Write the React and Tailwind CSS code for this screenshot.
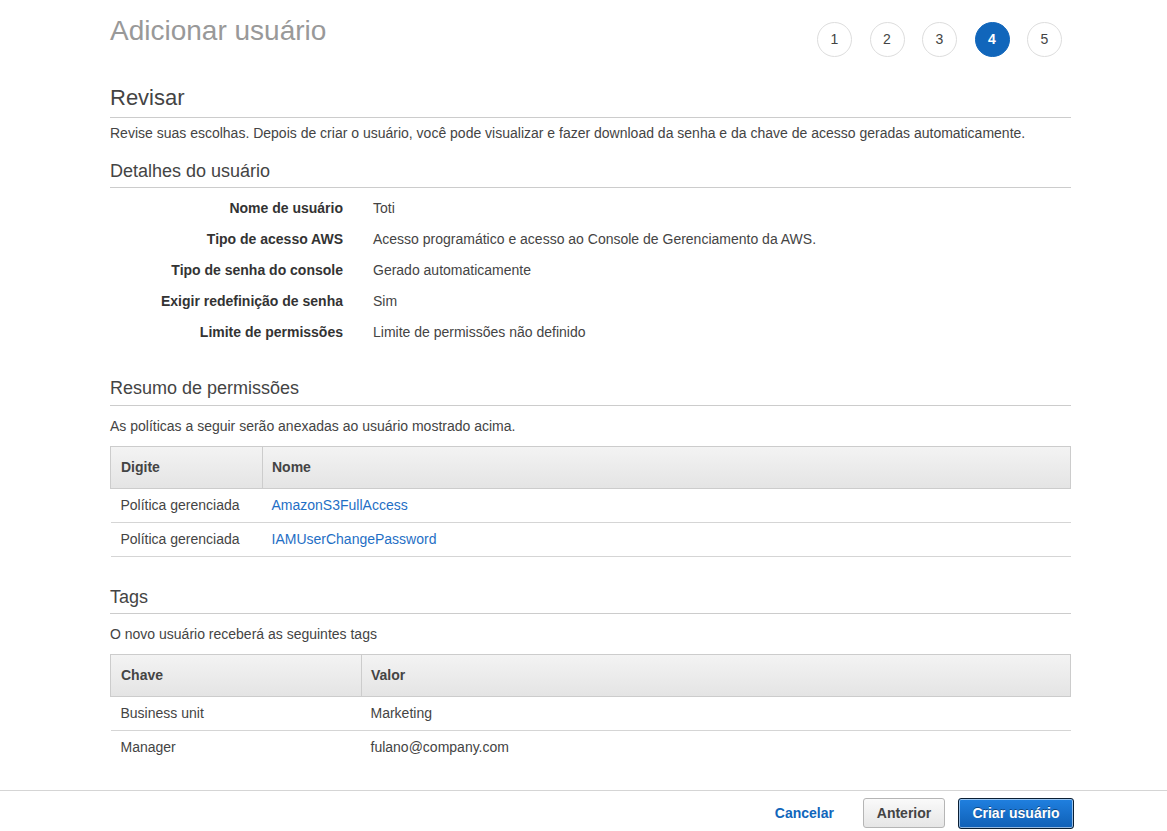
import React from "react";

const font = { fontFamily: '"Liberation Sans", Arial, sans-serif' };

function Steps() {
  const steps = [1, 2, 3, 4, 5];
  return (
    <div className="flex gap-[17.5px] mt-[7px] mr-[9px]">
      {steps.map((s) =>
        s === 4 ? (
          <div key={s} className="w-[35px] h-[35px] rounded-full bg-[#1166bb] border border-[#1166bb] flex items-center justify-center text-white font-bold text-[14px]">
            {s}
          </div>
        ) : (
          <div key={s} className="w-[35px] h-[35px] rounded-full bg-white border border-[#dddddd] flex items-center justify-center text-[#444] text-[14px]">
            {s}
          </div>
        )
      )}
    </div>
  );
}

function SubHeading({ children, className = "" }) {
  return (
    <h3 className={`text-[18px] leading-[24px] text-[#444] pb-[4px] border-b border-[#cccccc] ${className}`}>
      {children}
    </h3>
  );
}

function DataTable({ cols, rows, splitX, lastBorder }) {
  return (
    <table className="w-full border-collapse text-[14px]">
      <thead>
        <tr className="bg-gradient-to-b from-[#f3f3f3] to-[#e4e4e4] h-[42px]">
          <th className="border border-[#cccccc] text-left font-bold text-[#444] pl-[10px]" style={{ width: splitX }}>
            {cols[0]}
          </th>
          <th className="border border-[#cccccc] text-left font-bold text-[#444] pl-[9px]">{cols[1]}</th>
        </tr>
      </thead>
      <tbody>
        {rows.map((r, i) => (
          <tr
            key={i}
            className={`h-[34px] ${i < rows.length - 1 || lastBorder ? "border-b border-[#d5d5d5]" : ""}`}
          >
            <td className="pl-[10px] text-[#444]">{r[0]}</td>
            <td className={`pl-[9px] ${r[2] ? "text-[#1f6fc5]" : "text-[#444]"}`}>{r[1]}</td>
          </tr>
        ))}
      </tbody>
    </table>
  );
}

export default function App() {
  const details = [
    ["Nome de usuário", "Toti"],
    ["Tipo de acesso AWS", "Acesso programático e acesso ao Console de Gerenciamento da AWS."],
    ["Tipo de senha do console", "Gerado automaticamente"],
    ["Exigir redefinição de senha", "Sim"],
    ["Limite de permissões", "Limite de permissões não definido"],
  ];
  return (
    <div className="h-screen flex flex-col bg-white text-[#444]" style={font}>
      <main className="flex-1 overflow-hidden">
        <div className="ml-[110px] w-[961px]">
          <div className="flex justify-between items-start pt-[15px]">
            <h1 className="text-[28px] leading-[32px] text-[#999999]">Adicionar usuário</h1>
            <Steps />
          </div>

          <h2 className="mt-[27px] text-[22px] leading-[28px] text-[#444] pb-[5px] border-b border-[#cccccc]">Revisar</h2>
          <p className="mt-[5px] text-[14px] leading-[20px]">
            Revise suas escolhas. Depois de criar o usuário, você pode visualizar e fazer download da senha e da chave de acesso geradas automaticamente.
          </p>

          <SubHeading className="mt-[16px]">Detalhes do usuário</SubHeading>
          <div className="mt-[5px]">
            {details.map(([k, v]) => (
              <div key={k} className="flex items-center h-[31px] text-[14px]">
                <div className="w-[233px] text-right font-bold text-[#333]">{k}</div>
                <div className="ml-[30px] text-[#444]">{v}</div>
              </div>
            ))}
          </div>

          <SubHeading className="mt-[28px] pb-[5px]">Resumo de permissões</SubHeading>
          <p className="mt-[10px] text-[14px] leading-[20px]">As políticas a seguir serão anexadas ao usuário mostrado acima.</p>
          <div className="mt-[10px]">
            <DataTable
              cols={["Digite", "Nome"]}
              splitX="152px"
              lastBorder
              rows={[
                ["Política gerenciada", "AmazonS3FullAccess", true],
                ["Política gerenciada", "IAMUserChangePassword", true],
              ]}
            />
          </div>

          <SubHeading className="mt-[28px]">Tags</SubHeading>
          <p className="mt-[10px] text-[14px] leading-[20px]">O novo usuário receberá as seguintes tags</p>
          <div className="mt-[10px]">
            <DataTable
              cols={["Chave", "Valor"]}
              splitX="251px"
              rows={[
                ["Business unit", "Marketing"],
                ["Manager", "fulano@company.com"],
              ]}
            />
          </div>
        </div>
      </main>

      <footer className="h-[41px] border-t border-[#d5d5d5] flex items-start pt-[7px] justify-end pr-[93px] text-[14px]">
        <button className="font-bold text-[#1166bb] mr-[29px] h-[30px]">Cancelar</button>
        <button className="h-[30px] w-[82px] rounded-[3px] border border-[#b5b5b5] bg-gradient-to-b from-[#fafafa] to-[#e6e6e6] font-bold text-[#444] mr-[13px]">
          Anterior
        </button>
        <button className="h-[31px] w-[116px] rounded-[3px] border border-[#0b1f33] bg-gradient-to-b from-[#2080e0] to-[#0f60b6] font-bold text-white shadow-[inset_0_0_0_1px_rgba(255,255,255,0.55)] [text-shadow:0_-1px_0_rgba(0,0,0,0.4)]">
          Criar usuário
        </button>
      </footer>
    </div>
  );
}
